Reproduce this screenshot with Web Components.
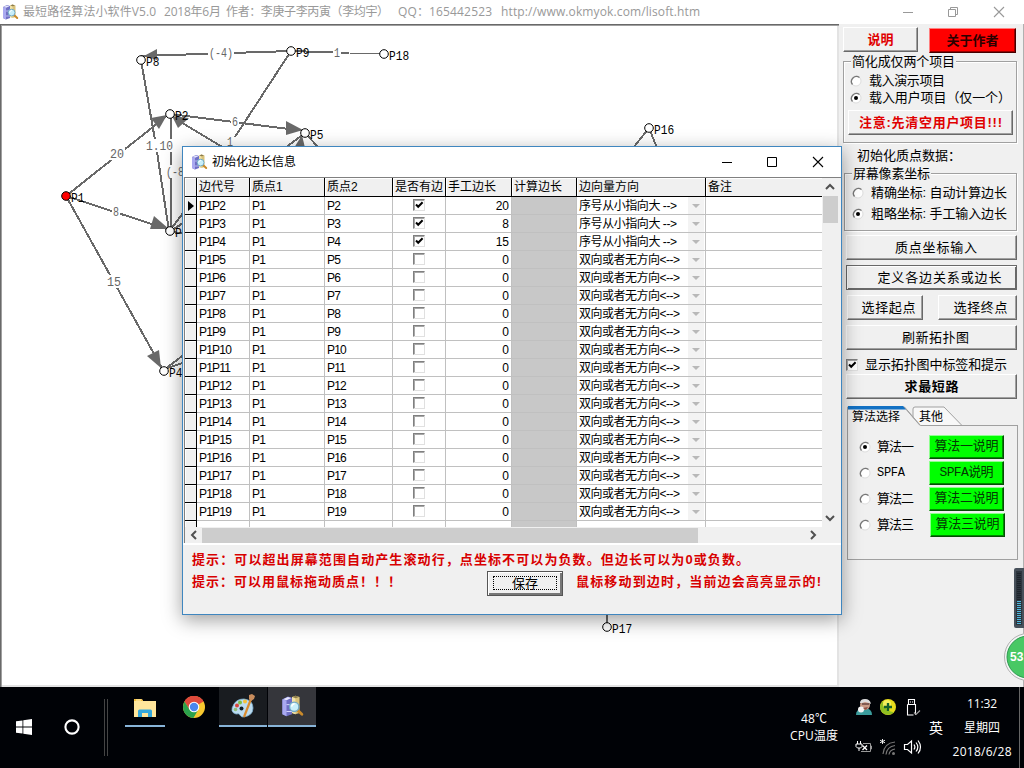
<!DOCTYPE html>
<html lang="zh-CN">
<head>
<meta charset="utf-8">
<title>最短路径算法小软件V5.0</title>
<style>
    html,body{margin:0;padding:0;width:1024px;height:768px;overflow:hidden;}
    body{font:12px/16px "Liberation Sans","Noto Sans CJK SC",sans-serif;color:#000;background:#f0f0f0;}
</style>
</head>
<body>
<app-desktop></app-desktop>
<script>
class BaseView extends HTMLElement {
    constructor() {
        super()
        this.attachShadow({mode: 'open'})
    }
    get css() { return '' }
    get html() { return '<slot></slot>' }
    connectedCallback() {
        this.shadowRoot.innerHTML = `<style>*{box-sizing:border-box}${this.css}</style>${this.html}`
    }
    attr(name, def = '') {
        return this.hasAttribute(name) ? this.getAttribute(name) : def
    }
}

// 文字：w 为整行宽度，用字间距撑满
class UiText extends BaseView {
    get css() {
        return `:host{display:inline-block;white-space:pre;flex:none}
                span{display:inline-block}`
    }
    get html() { return '<span><slot></slot></span>' }
    connectedCallback() {
        super.connectedCallback()
        let w = Number(this.attr('w', 0))
        if (!w) return
        let span = this.shadowRoot.querySelector('span')
        let now = span.getBoundingClientRect().width
        let n = Array.from(this.textContent).length
        let gap = (w - now) / Math.max(1, n - 1)
        span.style.letterSpacing = gap + 'px'
        span.style.marginRight = -gap + 'px'
    }
}

const ICONS = {
    app: `<path d="M1 3l4-2 3 1v12l-4 1.500-3-1.500z" fill="#6f6fc4"/><path d="M1 3l3 1v11.500l-3-1.500z" fill="#a9a9f0"/>
          <path d="M1.500 3l3.500-1.600 2.500.8-3.500 1.600z" fill="#e6e6ff"/><path d="M4 7h4M4 12h4" stroke="#d9d9ff" stroke-width=".7"/>
          <path d="M8 1.500l2.500-1 3 1v11.500l-3 1-2.500-1z" fill="#d9c27a"/><path d="M8 1.500l2.500 1v11.500l-2.500-1z" fill="#f1e2a8"/><path d="M8.500 1.400l2-.8 2.500.9-2.200.8z" fill="#8a7b4c"/>
          <path d="M12 11l3.200 3" stroke="#c98a2b" stroke-width="2" stroke-linecap="round"/>
          <circle cx="9.600" cy="8.600" r="3.400" fill="#c8effa" stroke="#71a9c5" stroke-width="1"/><path d="M7.700 8.500q.4-2 2.200-2.100" stroke="#fff" fill="none"/>`,
    win: `<path d="M0 2.300l6.500-.9v6.200H0zM7.300 1.300L16 0v7.600H7.300zM0 8.400h6.500v6.200L0 13.700zM7.300 8.400H16V16l-8.700-1.300z" fill="#fff"/>`,
    ring: `<circle cx="8" cy="8" r="6.600" fill="none" stroke="#fff" stroke-width="2.100"/>`,
    folder: `<path d="M0 0h8l1 2h13v16H0z" fill="#ffe69b"/><path d="M0 0h7.500l1.500 2H0z" fill="#f3bf3c"/><path d="M2 1h5" stroke="#fff3c4"/><path d="M4 18v-6q0-1.500 1.500-1.500h11Q18 10.500 18 12v6h-4v-4H8v4z" fill="#35a8dc"/>`,
    chrome: `<circle cx="11" cy="11" r="11" fill="#f7c82f"/><path d="M11 11L1.500 5.500A11 11 0 0 1 20.500 5.500z" fill="#df4a3c"/><path d="M11 5.800h9.700A11 11 0 0 0 1.500 5.500L6.600 14z" fill="#df4a3c"/>
          <path d="M1.500 5.500A11 11 0 0 0 10.400 22l5-8.400L6.500 13.600z" fill="#2ba24c"/><circle cx="11" cy="11" r="5.300" fill="#fff"/><circle cx="11" cy="11" r="4.200" fill="#4a87ee"/>`,
    paint: `<path d="M3 10Q6 5 13 5q9 1 9 9 0 8-10 9-2 0-3-2t-4-1Q-2 18 3 10z" fill="#bcdcf0" stroke="#7fb2d2" stroke-width=".8"/>
          <circle cx="6" cy="11.500" r="2" fill="#d8453c"/><circle cx="9" cy="8.500" r="2" fill="#7cbf45"/><circle cx="14" cy="7.500" r="2" fill="#f4c13a"/><circle cx="4.500" cy="15.500" r="1.800" fill="#8fbf7a"/><circle cx="10.500" cy="14.500" r="2" fill="#10202a"/>
          <path d="M20 5L13 23" stroke="#d98b2f" stroke-width="2.200"/><path d="M18 1l3-1 3 2-1 3-3 2-2-2z" fill="#c88d5d"/>`,
    man: `<path d="M0 16q0-6 6-6.500h5q5 1 5 6.500z" fill="#3b9c9c"/><circle cx="9" cy="6" r="5" fill="#c99a86"/><path d="M4 4q0-4 5-4t6 5l-2-1-4-1-3 1z" fill="#dedede"/><path d="M6 5h7" stroke="#5a3b38" stroke-width="1.300"/><circle cx="5" cy="10.500" r="3" fill="#f3f3f3"/><path d="M7 9l5-1-2 3z" fill="#8b4d43"/>`,
    plus: `<circle cx="8" cy="8" r="8" fill="#e6dc1c"/><path d="M0 8a8 8 0 0 0 14 5Q6 14 3 2Q0 5 0 8z" fill="#8fbf22"/><circle cx="7" cy="5" r="4" fill="#f5ef5c"/><path d="M8 4v8M4 8h8" stroke="#15602c" stroke-width="2.300"/>`,
    usb: `<path d="M4.500.5h6v5h-6zM3.500 5.500h8V16M3.500 5.500v10.500h6" fill="none" stroke="#fff" stroke-width="1.100"/><path d="M6.500 2.500v1M8.500 2.500v1" stroke="#fff"/><path d="M10 13.500l2 2 4-4" stroke="#a0a0a0" fill="none" stroke-width="1.200"/>`,
    power: `<path d="M1.500 2v3M4.500 2v3M0 5h6v2.500L4.500 9h-3L0 7.500zM3 9v3" fill="none" stroke="#fff"/><path d="M5 12.500h9.500v-8H7M14.500 7h1v3h-1" fill="none" stroke="#999"/><path d="M6.500 6.500l4.500 4.500M11 6.500L6.500 11" stroke="#fff" stroke-width="1.300"/>`,
    wifi: `<path d="M3 15Q4 4 15 3M6 15.500Q7 7.500 15 6.500M9 15.500Q9.500 11 15 10" fill="none" stroke="#777" stroke-width="1.200"/><circle cx="13.500" cy="14.500" r="1.500" fill="#777"/><path d="M2.500 0v5M0 1.200l5 2.600M5 1.200L0 3.800" stroke="#fff" stroke-width=".9"/>`,
    sound: `<path d="M.5 5.500h3l4-3.500v12l-4-3.500h-3z" fill="none" stroke="#fff" stroke-width="1.200"/><path d="M10 5.500q1.800 2.500 0 5M12 3.500q3.600 4.500 0 9M14 1.500q5 6.500 0 13" fill="none" stroke="#fff" stroke-width="1.200"/>`,
    min: `<path d="M0 5.500h10" stroke="currentColor"/>`,
    max: `<path d="M.5.5h9v9h-9z" stroke="currentColor" fill="none"/>`,
    restore: `<path d="M.5 2.500h7v7h-7zM2.500 2V.5h7v7H8" stroke="currentColor" fill="none"/>`,
    close: `<path d="M0 0l10 10M10 0L0 10" stroke="currentColor" fill="none" stroke-width="1.100"/>`,
    up: `<path d="M1 7l4-4 4 4" stroke="#505050" stroke-width="2" fill="none"/>`,
    down: `<path d="M1 3l4 4 4-4" stroke="#505050" stroke-width="2" fill="none"/>`,
    left: `<path d="M7 1L3 5l4 4" stroke="#505050" stroke-width="2" fill="none"/>`,
    right: `<path d="M3 1l4 4-4 4" stroke="#505050" stroke-width="2" fill="none"/>`
}

class UiIcon extends BaseView {
    get css() {
        return `:host{display:block;flex:none;width:${this.attr('w', 10)}px;height:${this.attr('h', this.attr('w', 10))}px}
                svg{display:block;width:100%;height:100%;overflow:visible}`
    }
    get html() {
        let box = this.attr('box', '0 0 ' + this.attr('w', 10) + ' ' + this.attr('h', this.attr('w', 10)))
        return `<svg viewBox="${box}">${ICONS[this.attr('name')]}</svg>`
    }
}

class UiButton extends BaseView {
    get css() {
        return `:host{display:flex;align-items:center;justify-content:center;box-sizing:border-box;height:25px;flex:none;
                    background:var(--bg,#f0f0f0);border:1px solid;border-color:#fff #696969 #696969 #fff;
                    box-shadow:inset -1px -1px 0 var(--edge,#a0a0a0);font-size:13px}
                :host([bold]){font-weight:bold}
                :host([red]){color:#e00000}
                :host([down]){border-color:#696969;box-shadow:inset 1px 1px 0 #fff,inset -1px -1px 0 #696969}
                :host([green]){--bg:#00ff00;--edge:#008a00;height:24px;border-color:#8fff8f #064d06 #064d06 #8fff8f;color:#043804;
                    font-family:"Liberation Mono","Noto Sans CJK SC",monospace}
                :host([alarm]){--bg:#f00;--edge:#900;border-color:#ff8080 #400 #400 #ff8080;color:#2c0000}`
    }
}

class UiCheck extends BaseView {
    get css() {
        return `:host{display:block;flex:none;width:12px;height:12px;box-sizing:border-box;background:#fff;border:1px solid;
                    border-color:#808080 #e0e0e0 #e0e0e0 #808080;box-shadow:inset 1px 1px 0 #a8a8a8}
                svg{display:block;width:10px;height:10px}`
    }
    get html() {
        return this.hasAttribute('on') ? `<svg viewBox="0 0 10 10"><path d="M2 4.500l2.200 2.300L8.600 2.300" fill="none" stroke="#000" stroke-width="2"/></svg>` : ''
    }
}

class UiRadio extends BaseView {
    get css() {
        return `:host{display:flex;align-items:center;height:16px;flex:none;font-size:13px;gap:var(--gap,7px)}
                svg{width:12px;height:12px;flex:none}`
    }
    get html() {
        return `<svg viewBox="0 0 12 12"><circle cx="6" cy="6" r="5" fill="#fff" stroke="#ddd"/>
                <path d="M2.500 9.500A5 5 0 0 1 9.500 2.500" fill="none" stroke="#777" stroke-width="1.300"/>
                ${this.hasAttribute('on') ? '<circle cx="6" cy="6" r="2" fill="#000"/>' : ''}</svg><slot></slot>`
    }
}

class GroupBox extends BaseView {
    get css() {
        return `:host{display:flex;flex-direction:column;box-sizing:border-box;border:1px solid #a0a0a0;
                    box-shadow:inset 1px 1px 0 #fff,1px 1px 0 #fff;flex:none}
                .cap{align-self:flex-start;background:#f0f0f0;height:16px;margin:-8px 0 0 7px;padding:0 1px;font-size:13px;line-height:15px}`
    }
    get html() { return `<div class="cap"><ui-text w="${this.attr('w')}">${this.attr('title')}</ui-text></div><slot></slot>` }
}

const NODES = [
    ['P8', 141, 60], ['P9', 291, 51], ['P18', 384, 54], ['P2', 170, 114], ['P5', 305, 133],
    ['P3', 170, 231], ['P4', 164, 371], ['P16', 649, 128], ['P17', 607, 627], ['P1', 66, 196, '#f00']
]
const EDGES = [
    [141, 56, 291, 51], [291, 51, 349, 53], [349, 53, 384, 54, 1], [291, 51, 235, 137], [170, 114, 305, 131], [174, 118, 224, 148],
    [66, 196, 168, 115], [141, 60, 155, 140], [157, 152, 169, 231], [171, 116, 171, 231], [66, 196, 170, 230], [66, 196, 163, 370],
    [171, 229, 186, 209], [171, 231, 186, 221], [172, 232, 186, 234], [164, 370, 186, 353], [164, 369, 186, 362],
    [305, 133, 285, 148], [305, 133, 320, 149], [649, 128, 633, 148], [649, 128, 657, 148], [607, 610, 607, 627]
]
const ARROWS = ['157,49 144,56 157,60', '286,121 303,130 286,135', '172,116 189,118 178,128', '151,118 167,115 159,129',
    '154,216 169,229 150,229', '159,350 161,368 147,356', '302,135 294,148 305,148']
const WEIGHTS = [['(-4)', 209, 53, 24], ['1', 334, 53, 6], ['6', 232, 122, 6], ['1', 227, 142, 6], ['20', 110, 154, 14],
    ['1.10', 146, 146, 27], ['(-8)', 166, 172, 24], ['8', 113, 212, 6], ['15', 107, 282, 14]]

class GraphView extends BaseView {
    get css() {
        return `:host{display:block;background:#fff;border:solid #696969;border-width:1px 0 0 1px;box-sizing:border-box;overflow:hidden;
                    box-shadow:inset 1px 1px 0 #a0a0a0,inset -2px -2px 0 #e3e3e3}
                svg{display:block;margin:-1px 0 0 -1px}
                text{font:12.5px "Liberation Mono",monospace}`
    }
    get html() {
        let lines = EDGES.map(([a, b, c, d, t]) => `<line x1="${a}" y1="${b}" x2="${c}" y2="${d}" stroke-width="${t || 2}"/>`).join('')
        let arrows = ARROWS.map(p => `<polygon points="${p}"/>`).join('')
        let weights = WEIGHTS.map(([t, x, y, w]) => `<rect x="${x - 1}" y="${y - 7}" width="${w + 2}" height="13" fill="#fff"/>
            <text x="${x}" y="${y + 4}" textLength="${w}" lengthAdjust="spacingAndGlyphs" fill="#666">${t}</text>`).join('')
        let nodes = NODES.map(([t, x, y, c]) => `<circle cx="${x}" cy="${y}" r="4.300" fill="${c || '#fff'}" stroke="#000"/>
            <text x="${x + 5}" y="${y + 6}" textLength="${t.length * 6.7}" lengthAdjust="spacingAndGlyphs">${t}</text>`).join('')
        return `<svg width="837" height="661" viewBox="0 24 837 661"><g stroke="#696969" shape-rendering="crispEdges">${lines}</g>
            <g fill="#696969">${arrows}</g>${weights}${nodes}</svg>`
    }
}

class SidePanel extends BaseView {
    get css() {
        return `:host{display:flex;flex-direction:column;background:#f0f0f0;padding:3px 0 0 4px;box-sizing:border-box;border-right:1px solid #b0b0b0;overflow:hidden}
                .row{display:flex;flex:none}
                .pad{margin-left:3px;width:171px}
                .tabs{display:grid;height:20px;margin:6px 0 0 4px;width:171px;flex:none}
                .tabs svg,.tabs div{grid-area:1/1}
                .tabs svg{display:block;width:171px;height:20px;overflow:visible}
                .tabs div{display:flex;padding:3px 0 0 5px;gap:19px}
                .page{margin-left:4px;width:171px;height:134px;border:1px solid #a0a0a0;border-top:0;padding:9px 0 0 11px;flex:none}
                .page .row{height:26px}
                .page ui-radio{width:70px;--gap:6px;margin-top:4px}`
    }
    get html() {
        let algs = ['算法一', 'SPFA', '算法二', '算法三']
        return `
        <div class="row"><ui-button bold red style="width:75px"><ui-text w="26">说明</ui-text></ui-button>
            <ui-button bold alarm style="width:87px;margin:1px 0 0 11px"><ui-text w="52">关于作者</ui-text></ui-button></div>
        <group-box title="简化成仅两个项目" w="103" style="width:174px;height:82px;margin-top:8px">
            <ui-radio style="margin:3px 0 0 6px"><ui-text w="76">载入演示项目</ui-text></ui-radio>
            <ui-radio on style="margin:1px 0 0 6px"><ui-text w="142">载入用户项目（仅一个）</ui-text></ui-radio>
            <ui-button bold red style="width:165px;margin:4px 0 0 4px"><ui-text w="143">注意:先清空用户项目!!!</ui-text></ui-button>
        </group-box>
        <div style="margin:5px 0 0 14px;font-size:13px"><ui-text w="104">初始化质点数据：</ui-text></div>
        <group-box title="屏幕像素坐标" w="77" style="width:173px;height:58px;margin:9px 0 0 1px">
            <ui-radio style="margin:3px 0 0 7px"><ui-text w="136">精确坐标: 自动计算边长</ui-text></ui-radio>
            <ui-radio on style="margin:5px 0 0 7px"><ui-text w="136">粗略坐标: 手工输入边长</ui-text></ui-radio>
        </group-box>
        <ui-button class="pad" style="margin-top:4px;padding-left:9px"><ui-text w="82">质点坐标输入</ui-text></ui-button>
        <ui-button class="pad" down style="margin-top:5px;padding-left:16px"><ui-text w="124">定义各边关系或边长</ui-text></ui-button>
        <div class="row" style="margin:5px 0 0 4px"><ui-button style="width:76px;padding-left:7px"><ui-text w="54">选择起点</ui-text></ui-button>
            <ui-button style="width:79px;margin-left:15px;padding-left:6px"><ui-text w="54">选择终点</ui-text></ui-button></div>
        <ui-button class="pad" style="margin-top:5px;padding-left:8px"><ui-text w="67">刷新拓扑图</ui-text></ui-button>
        <div class="row" style="margin:7px 0 0 3px;align-items:center;height:16px;gap:7px;font-size:13px"><ui-check on></ui-check><ui-text w="142">显示拓扑图中标签和提示</ui-text></div>
        <ui-button bold class="pad" style="margin-top:1px"><ui-text w="54">求最短路</ui-text></ui-button>
        <div class="tabs" style="margin-top:7px">
            <svg><path d="M66 19.500V3q0-2 2-2h29l18 18.500" fill="#f8f8f8" stroke="#a0a0a0"/><path d="M.5 20V1h57l16 18.500h97.500" fill="none" stroke="#a0a0a0"/><path d="M1 20V1.500h56l16 18.500z" fill="#f0f0f0"/><path d="M57 1l16 18.500" stroke="#a0a0a0"/><path d="M1 0h55l3 3.500H1z" fill="#1271c4"/></svg>
            <div><ui-text w="48">算法选择</ui-text><ui-text w="24">其他</ui-text></div>
        </div>
        <div class="page">${algs.map((a, i) => `<div class="row"><ui-radio ${i ? '' : 'on'}><ui-text w="${i === 1 ? 28 : 37}"
            ${i === 1 ? 'style="font:12px \'Liberation Mono\',monospace"' : ''}>${a}</ui-text></ui-radio>
            <ui-button green style="width:75px${i === 3 ? ';margin-left:1px' : ''}"><ui-text w="${i === 1 ? 54 : 64}">${a}说明</ui-text></ui-button></div>`).join('')}</div>`
    }
}

class EdgeGrid extends BaseView {
    get css() {
        return `:host{display:grid;grid-template-columns:637px 16px;grid-template-rows:349px 16px;margin-left:1px;border:solid #808080;border-width:1px 0 0 1px;
                    background:#f0f0f0;height:366px}
                .rows{overflow:hidden;background:#fff}
                .r{display:grid;grid-template-columns:12px 53px 75px 68px 53px 66px 65px 129px 116px;height:18px}
                .r>div{border:solid #c0c0c0;border-width:0 1px 1px 0;padding:0 3px 0 2px;line-height:19px;white-space:pre;overflow:hidden;letter-spacing:-.8px}
                .r>div:first-child{background:#f0f0f0;border-color:#000;padding:4px 0 0 3px;box-shadow:inset 1px 1px 0 #fff}
                .r>div:last-child{border-right:0}
                .h.r{height:19px}
                .h>div{background:#f0f0f0;border-color:#000;box-shadow:inset 1px 1px 0 #fff;letter-spacing:0;padding-right:0}
                .r .c{display:flex;justify-content:center;align-items:center;padding:0 0 1px}
                .r .n{text-align:right;letter-spacing:0;padding-right:2px}
                .r .g{background:#c8c8c8;border-color:#c0c0c0}
                .r.h .g{background:#f0f0f0;border-color:#000}
                .r .d{display:flex;justify-content:space-between;padding-right:1px;letter-spacing:0}
                .d i{width:16px;height:17px;background:#f3f3f3;display:flex;justify-content:center;align-items:center}
                .d i svg{width:8px;height:4px}
                .v,.z{display:flex;align-items:center}
                .v{flex-direction:column}
                .v b{background:#cdcdcd;width:15px;height:27px;margin:4px 0 auto}
                .z{grid-column:1/3;padding-left:4px}
                .z b{background:#cdcdcd;width:496px;height:15px;margin:0 auto 0 3px}`
    }
    get html() {
        let row = i => {
            let one = i <= 4
            return `<div class="r"><div>${i === 2 ? '<svg width="6" height="10" style="display:block"><path d="M0 0v10l6-5z"/></svg>' : ''}</div>
                <div>P1P${i}</div><div>P1</div><div>P${i}</div><div class="c"><ui-check ${one ? 'on' : ''}></ui-check></div>
                <div class="n">${{2: 20, 3: 8, 4: 15}[i] || 0}</div><div class="g"></div>
                <div class="d"><ui-text w="${one ? 98 : 101}">${one ? '序号从小指向大 --&gt;' : '双向或者无方向&lt;--&gt;'}</ui-text><i><svg viewBox="0 0 8 4"><path d="M0 0h8L4 4z" fill="#b8b8b8"/></svg></i></div><div></div></div>`
        }
        let heads = ['', '边代号', '质点1', '质点2', '是否有边', '手工边长', '计算边长', '边向量方向', '备注']
        let rows = ''
        for (let i = 2; i < 20; i++) rows += row(i)
        let rest = `<div class="r">${heads.map((h, k) => `<div class="${k === 6 ? 'g' : ''}"></div>`).join('')}</div>`
        return `<div class="rows"><div class="r h">${heads.map((h, k) => `<div${k === 6 ? ' class="g"' : ''}>${h}</div>`).join('')}</div>${rows}${rest}</div>
            <div class="v"><ui-icon name="up" style="margin-top:4px"></ui-icon><b></b><ui-icon name="down" style="margin-bottom:4px"></ui-icon></div>
            <div class="z"><ui-icon name="left"></ui-icon><b></b><ui-icon name="right" style="margin-right:20px"></ui-icon></div>`
    }
}

class EdgeDialog extends BaseView {
    get css() {
        return `:host{display:flex;flex-direction:column;box-sizing:border-box;width:660px;height:469px;border:1px solid #3f86bf;background:#f0f0f0;
                    box-shadow:0 5px 18px rgba(0,0,0,.38)}
                header{display:flex;align-items:center;height:30px;background:#fff;padding-left:8px;flex:none}
                header .sp{flex:1}
                .tips{border-top:2px solid #fff;margin-top:0;color:#d80000;font-weight:bold;font-size:13px;padding:7px 0 0 8px;flex:1}
                .two{display:flex;height:25px;margin-top:3px}
                .save{border:1px solid #555;box-shadow:inset 1px 1px 0 #fff,inset -2px -2px 0 #777;width:76px;height:25px;padding:4px 5px 5px;color:#000;font-weight:normal}
                .save div{border:1px dotted #000;height:100%;line-height:14px;text-align:center}`
    }
    get html() {
        return `<header><ui-icon name="app" w="16"></ui-icon><ui-text w="84" style="margin-left:5px">初始化边长信息</ui-text><span class="sp"></span>
            <ui-icon name="min" w="11"></ui-icon><ui-icon name="max" w="10" style="margin-left:34px"></ui-icon><ui-icon name="close" w="10" style="margin:0 18px 0 36px"></ui-icon></header>
            <edge-grid></edge-grid>
            <div class="tips"><ui-text w="557" style="margin-left:1px">提示：可以超出屏幕范围自动产生滚动行，点坐标不可以为负数。但边长可以为0或负数。</ui-text>
            <div class="two"><ui-text w="209" style="margin-left:1px;padding-top:3px">提示：可以用鼠标拖动质点！！！</ui-text>
            <div class="save" style="margin-left:86px"><div><ui-text w="26">保存</ui-text></div></div>
            <ui-text w="245" style="margin-left:13px;padding-top:3px">鼠标移动到边时，当前边会高亮显示的!</ui-text></div></div>`
    }
}

class TaskBar extends BaseView {
    get css() {
        return `:host{display:flex;background:#000206;color:#fff;font-family:"Open Sans","Noto Sans CJK SC",sans-serif;overflow:hidden}
                .sep{width:4px;height:57px;border:solid #444;border-width:0 1px;margin:12px 0 0 24px;box-sizing:border-box}
                .t{width:48px;height:40px;display:flex;justify-content:center;align-items:center;border-bottom:2px solid transparent;flex:none}
                .tray{display:grid;grid-template-columns:24px 24px 24px;grid-template-rows:40px 40px;align-items:center}
                .mid{display:flex;flex-direction:column;align-items:center}`
    }
    get html() {
        return `<ui-icon name="win" w="16" style="margin:32px 0 0 16px"></ui-icon><ui-icon name="ring" w="16" style="margin:32px 0 0 32px"></ui-icon>
            <div class="sep"></div>
            <div class="t" style="width:40px;border-color:#88b4d8;margin-left:17px"><ui-icon name="folder" w="22" h="18" style="margin-top:3px"></ui-icon></div>
            <div class="t" style="margin-left:5px"><ui-icon name="chrome" w="22" style="margin-top:2px"></ui-icon></div>
            <div class="t" style="background:#191c20;border-color:#88b4d8;margin-left:1px"><ui-icon name="paint" w="24"></ui-icon></div>
            <div class="t" style="background:#35363b;border-color:#88b4d8;margin-left:1px"><ui-icon name="app" w="22" box="0 0 16 16"></ui-icon></div>
            <div class="mid" style="margin:24px 0 0 474px;width:48px"><ui-text w="26" style="height:17px">48℃</ui-text><ui-text w="48">CPU温度</ui-text></div>
            <div class="tray" style="margin-left:18px"><ui-icon name="man" w="16"></ui-icon><ui-icon name="plus" w="16"></ui-icon><ui-icon name="usb" w="16"></ui-icon>
            <ui-icon name="power" w="16"></ui-icon><ui-icon name="wifi" w="16"></ui-icon><ui-icon name="sound" w="16"></ui-icon></div>
            <ui-text w="14" style="margin:33px 0 0 1px;font-size:14px">英</ui-text>
            <div class="mid" style="margin:9px 0 0 9px;width:60px;gap:8px"><ui-text w="30">11:32</ui-text><ui-text w="36">星期四</ui-text><ui-text w="59">2018/6/28</ui-text></div>
            <div style="border-left:1px solid #666;margin-left:7px"></div>`
    }
}

// 屏幕右侧悬浮球
class FloatBall extends BaseView {
    get css() { return `:host{display:block;width:20px;height:116px;overflow:hidden}svg{display:block}` }
    get html() {
        let bars = ''
        for (let y = 5; y < 56; y += 2) bars += `<path d="M13 ${y}.5h4" stroke="${y > 31 ? '#4fb6dc' : '#1d242c'}"/>`
        return `<svg width="20" height="116"><rect x="10" width="14" height="60" rx="2" fill="#47505a"/><rect x="12" y="3" width="6" height="54" fill="#2d353e"/>${bars}
            <circle cx="24" cy="89" r="23.500" fill="#f5f5f5" stroke="#b0b0b0"/><circle cx="24" cy="89" r="21" fill="#48c864" stroke="#2c9a50"/>
            <text x="6" y="93" font-family="Liberation Sans" font-size="12" font-weight="bold" fill="#fff">53</text></svg>`
    }
}

class AppDesktop extends BaseView {
    get css() {
        return `:host{display:grid;grid-template-columns:839px 185px;grid-template-rows:24px 663px 81px;width:1024px;height:768px;position:relative;overflow:hidden}
                header,task-bar{grid-column:1/3}
                header{background:#fff;display:flex;align-items:center;color:#999;padding-left:2px}
                .cap{font:12px/16px "Open Sans","Noto Sans CJK SC",sans-serif;margin-left:5px;display:flex}
                edge-dialog{position:absolute;left:182px;top:146px}
                float-ball{position:absolute;right:0;top:568px}`
    }
    get html() {
        return `<header><ui-icon name="app" w="16"></ui-icon><div class="cap"><ui-text w="133">最短路径算法小软件V5.0</ui-text><ui-text w="57" style="margin-left:8px">2018年6月</ui-text>
            <ui-text w="163" style="margin-left:5px">作者：李庚子李丙寅（李均宇）</ui-text><ui-text w="94" style="margin-left:9px">QQ：165442523</ui-text><ui-text w="199" style="margin-left:9px">http://www.okmyok.com/lisoft.htm</ui-text></div>
            <ui-icon name="min" w="10" style="margin-left:auto"></ui-icon><ui-icon name="restore" w="10" style="margin:0 36px 0 35px"></ui-icon><ui-icon name="close" w="10" style="margin-right:20px"></ui-icon></header>
            <graph-view></graph-view><side-panel></side-panel><task-bar></task-bar>
            <edge-dialog></edge-dialog><float-ball></float-ball>`
    }
}

customElements.define('app-desktop', AppDesktop)
customElements.define('graph-view', GraphView)
customElements.define('side-panel', SidePanel)
customElements.define('task-bar', TaskBar)
customElements.define('float-ball', FloatBall)
customElements.define('edge-dialog', EdgeDialog)
customElements.define('edge-grid', EdgeGrid)
customElements.define('group-box', GroupBox)
customElements.define('ui-button', UiButton)
customElements.define('ui-check', UiCheck)
customElements.define('ui-radio', UiRadio)
customElements.define('ui-icon', UiIcon)
customElements.define('ui-text', UiText)
</script>
</body>
</html>
